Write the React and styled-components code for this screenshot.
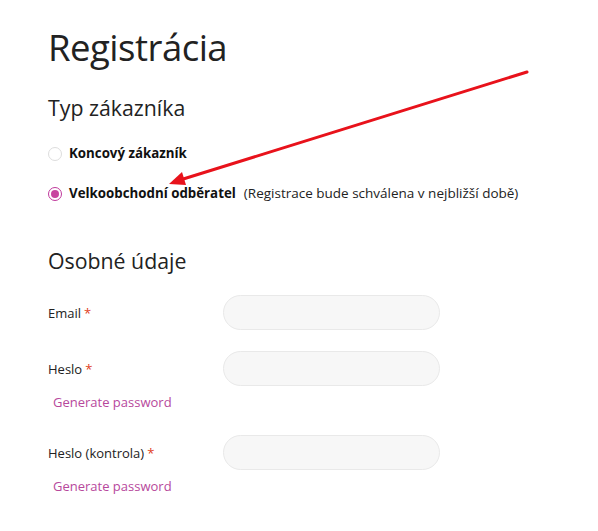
import styled, { createGlobalStyle } from "styled-components";

const GlobalStyle = createGlobalStyle`
  body {
    margin: 0;
    background: #fff;
    font-family: "Open Sans", "Noto Sans", sans-serif;
    color: #222;
  }
`;

const Page = styled.div`
  position: relative;
  width: 598px;
  height: 531px;
  padding: 22px 0 0 48px;
  box-sizing: border-box;
  overflow: hidden;
`;

const Title = styled.h1`
  margin: 0;
  font-size: 36.5px;
  font-weight: 400;
  line-height: 50px;
  letter-spacing: -0.5px;
  color: #222;
`;

const SectionTitle = styled.h2`
  margin: ${(p) => p.$top}px 0 0 0;
  font-size: 21.3px;
  font-weight: 400;
  line-height: 30px;
  color: #222;
`;

const RadioList = styled.div`
  display: flex;
  flex-direction: column;
  gap: 21px;
  margin-top: 21px;
`;

const RadioRow = styled.label`
  display: flex;
  align-items: center;
  gap: 7px;
  font-size: 13px;
  line-height: 19px;
`;

const RadioDot = styled.span`
  width: 12px;
  height: 12px;
  border-radius: 50%;
  border: 1px solid ${(p) => (p.$checked ? "#c0399c" : "#ddd")};
  background: #fff;
  display: flex;
  align-items: center;
  justify-content: center;
  flex: none;

  &::after {
    content: "";
    width: 8px;
    height: 8px;
    border-radius: 50%;
    background: ${(p) => (p.$checked ? "#c8449f" : "transparent")};
  }
`;

const Strong = styled.span`
  font-weight: 700;
  font-size: 13.3px;
  color: #111;
`;

const Note = styled.span`
  margin-left: 1px;
  font-size: 13.5px;
  color: #222;
`;

const Field = styled.div`
  display: grid;
  grid-template-columns: 175px 217px;
  align-items: center;
  margin-top: ${(p) => p.$top}px;
`;

const Label = styled.span`
  font-size: 13px;
  color: #222;
`;

const Required = styled.span`
  color: #e0401c;
  margin-left: 3px;
`;

const Input = styled.input`
  height: 35px;
  box-sizing: border-box;
  border: 1px solid #e9e9e9;
  border-radius: 18px;
  background: #f7f7f7;
  outline: none;
`;

const GenLink = styled.a`
  display: block;
  margin: 6px 0 0 5px;
  font-size: 13px;
  color: #b7489c;
  text-decoration: none;
  line-height: 20px;
`;

const Arrow = styled.svg`
  position: absolute;
  left: 0;
  top: 0;
  pointer-events: none;
`;

export default function App() {
  return (
    <>
      <GlobalStyle />
      <Page>
        <Title>Registrácia</Title>
        <SectionTitle $top={21}>Typ zákazníka</SectionTitle>
        <RadioList>
          <RadioRow>
            <RadioDot />
            <Strong>Koncový zákazník</Strong>
          </RadioRow>
          <RadioRow>
            <RadioDot $checked />
            <Strong>Velkoobchodní odběratel</Strong>
            <Note>(Registrace bude schválena v nejbližší době)</Note>
          </RadioRow>
        </RadioList>
        <SectionTitle $top={43}>Osobné údaje</SectionTitle>
        <Field $top={19}>
          <Label>
            Email<Required>*</Required>
          </Label>
          <Input type="email" />
        </Field>
        <Field $top={21}>
          <Label>
            Heslo<Required>*</Required>
          </Label>
          <Input type="password" />
        </Field>
        <GenLink href="#">Generate password</GenLink>
        <Field $top={23}>
          <Label>
            Heslo (kontrola)<Required>*</Required>
          </Label>
          <Input type="password" />
        </Field>
        <GenLink href="#">Generate password</GenLink>
        <Arrow width="598" height="531" viewBox="0 0 598 531">
          <line x1="527" y1="72" x2="180" y2="180" stroke="#e8121b" strokeWidth="3" strokeLinecap="round" />
          <polygon points="169,184 182,172 186,185" fill="#e8121b" />
        </Arrow>
      </Page>
    </>
  );
}
